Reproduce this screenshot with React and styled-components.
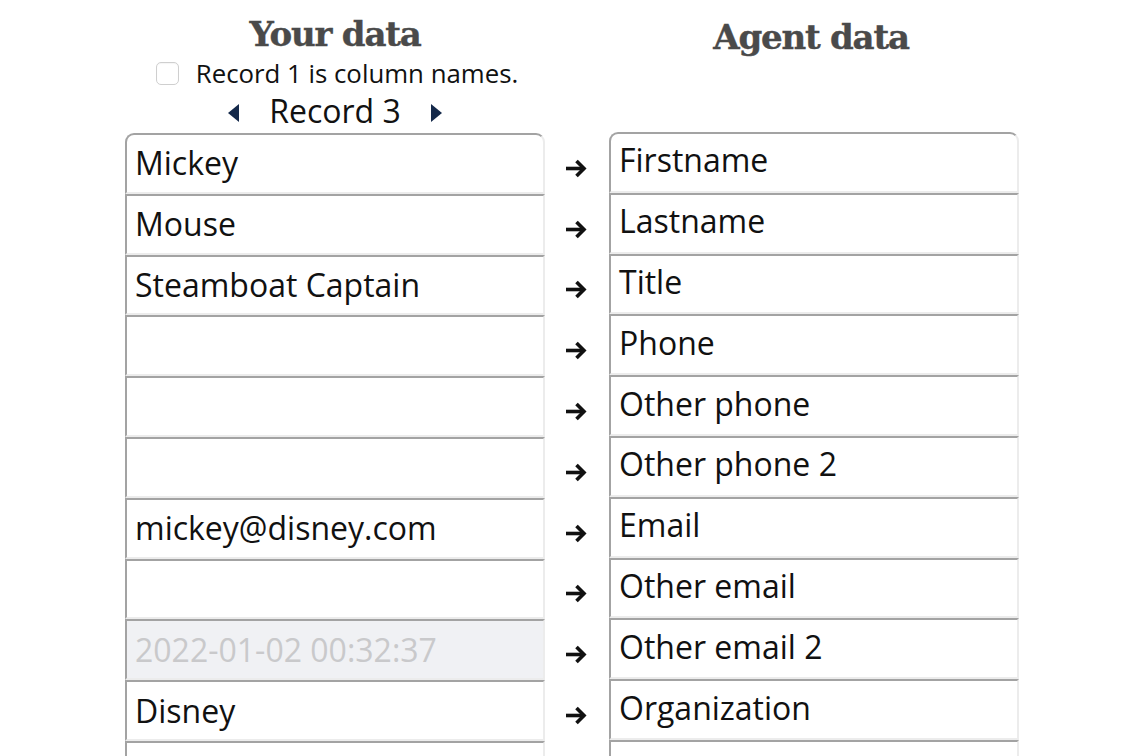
import React from "react";
import styled, { createGlobalStyle } from "styled-components";

const Global = createGlobalStyle`
  html, body { margin: 0; padding: 0; background: #ffffff; }
  body { font-family: "Open Sans", "Noto Sans", sans-serif; color: #111; }
`;

const Page = styled.div`
  display: grid;
  grid-template-columns: 420px 64px 414px;
  justify-content: center;
  align-items: start;
`;

const Column = styled.div`
  display: flex;
  flex-direction: column;
  align-items: stretch;
  padding-top: ${(p) => p.$top}px;
`;

const Heading = styled.h2`
  margin: 0;
  padding-right: ${(p) => p.$shift || 0}px;
  font-family: "DejaVu Serif", "Liberation Serif", serif;
  font-weight: 700;
  font-size: 34px;
  line-height: 40px;
  letter-spacing: -1.2px;
  color: #4a4a4a;
  text-align: center;
  -webkit-text-stroke: 0.4px #4a4a4a;
`;

const CheckRow = styled.label`
  display: flex;
  align-items: center;
  justify-content: center;
  gap: 17px;
  height: 30px;
  margin-top: 4px;
  padding-left: 4px;
  font-size: 25.8px;
  line-height: 30px;
  color: #111;
`;

const CheckBox = styled.span`
  display: inline-block;
  width: 23px;
  height: 23px;
  box-sizing: border-box;
  border: 1px solid #cfcfcf;
  border-radius: 5px;
  background: #fff;
  box-shadow: inset 0 1px 1px rgba(0, 0, 0, 0.04);
`;

const Nav = styled.div`
  display: flex;
  align-items: center;
  justify-content: center;
  gap: 30px;
  height: 38px;
  margin-top: 4px;
  font-size: 32px;
  line-height: 38px;
`;

const Caret = styled.svg`
  width: 11px;
  height: 18px;
  margin-top: 4px;
  fill: #14294a;
`;

const FieldList = styled.div`
  display: flex;
  flex-direction: column;
  margin-top: ${(p) => p.$gap || 0}px;
  width: ${(p) => p.$w}px;
`;

const Field = styled.div`
  box-sizing: border-box;
  height: 60.8px;
  display: flex;
  align-items: center;
  padding: 0 0 ${(p) => (p.$right ? 4 : 0)}px 8px;
  border-style: solid;
  border-width: 2px;
  border-color: #a3a3a3 #ececec #ececec #a3a3a3;
  background: ${(p) => (p.$disabled ? "#f0f1f4" : "#ffffff")};
  color: ${(p) => (p.$disabled ? "#c9c9cb" : "#111")};
  font-size: 32px;
  line-height: 44px;
  white-space: nowrap;
  overflow: hidden;
  &:first-child {
    border-radius: 9px 9px 0 0;
  }
`;

const ArrowCell = styled.div`
  height: 60.8px;
  display: flex;
  align-items: center;
  justify-content: center;
  padding-right: 2px;
`;

const ArrowIcon = () => (
  <svg width="22" height="19" viewBox="0 0 22 19" aria-hidden="true">
    <path d="M1 9.5 H19" stroke="#111" strokeWidth="3.6" fill="none" />
    <path d="M11.5 2 L19 9.5 L11.5 17" stroke="#111" strokeWidth="3.6" fill="none" strokeLinejoin="miter" />
  </svg>
);

const yourData = [
  { v: "Mickey" },
  { v: "Mouse" },
  { v: "Steamboat Captain" },
  { v: "" },
  { v: "" },
  { v: "" },
  { v: "mickey@disney.com" },
  { v: "" },
  { v: "2022-01-02 00:32:37", disabled: true },
  { v: "Disney" },
  { v: "" },
];

const agentData = [
  "Firstname",
  "Lastname",
  "Title",
  "Phone",
  "Other phone",
  "Other phone 2",
  "Email",
  "Other email",
  "Other email 2",
  "Organization",
  "",
];

export default function App() {
  return (
    <>
      <Global />
      <Page>
        <Column $top={14}>
          <Heading>Your data</Heading>
          <CheckRow>
            <CheckBox />
            <span>Record 1 is column names.</span>
          </CheckRow>
          <Nav>
            <Caret viewBox="0 0 11 18">
              <polygon points="11,0 11,18 0,9" />
            </Caret>
            <span>Record 3</span>
            <Caret viewBox="0 0 11 18">
              <polygon points="0,0 0,18 11,9" />
            </Caret>
          </Nav>
          <FieldList $gap={3} $w={420}>
            {yourData.map((d, i) => (
              <Field key={i} $disabled={d.disabled}>
                {d.v}
              </Field>
            ))}
          </FieldList>
        </Column>
        <Column $top={138}>
          {agentData.map((_, i) => (
            <ArrowCell key={i}>
              <ArrowIcon />
            </ArrowCell>
          ))}
        </Column>
        <Column $top={17}>
          <Heading $shift={10}>Agent data</Heading>
          <FieldList $gap={75} $w={410}>
            {agentData.map((t, i) => (
              <Field key={i} $right>
                {t}
              </Field>
            ))}
          </FieldList>
        </Column>
      </Page>
    </>
  );
}
